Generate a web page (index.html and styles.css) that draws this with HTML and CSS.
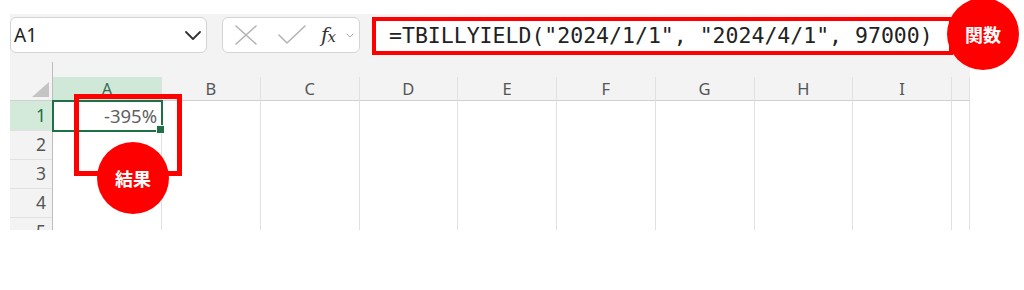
FILE: index.html
```html
<!DOCTYPE html>
<html lang="ja">

<head>
	<meta charset="UTF-8">
	<meta name="viewport" content="width=device-width, initial-scale=1.0">
	<title>TBILLYIELD</title>
	<link rel="stylesheet" href="styles.css">
</head>

<body>
	<main class="sheet">
		<header class="toolbar">
			<div class="namebox">
				<span>A1</span>
				<svg class="chev" width="16" height="9" viewBox="0 0 16 9"><path d="M1 1l7 7 7-7" /></svg>
			</div>
			<div class="fbuttons">
				<svg class="btn" width="22" height="20" viewBox="0 0 22 20"><path d="M1 1l20 18M21 1L1 19" /></svg>
				<svg class="btn" width="28" height="20" viewBox="0 0 28 20"><path d="M1 10l8 8L27 1" /></svg>
				<span class="fx"><i>f</i><i class="x">x</i></span>
				<svg class="mini" width="8" height="5" viewBox="0 0 8 5"><path d="M1 1l3 3 3-3" /></svg>
			</div>
			<div class="formula">=TBILLYIELD("2024/1/1", "2024/4/1", 97000)</div>
		</header>

		<section class="grid">
			<div class="row gap">
				<div class="rh"></div>
				<div class="fill"></div>
			</div>
			<div class="row head">
				<div class="rh corner"><span></span></div>
				<div class="ch on">A</div>
				<div class="ch">B</div>
				<div class="ch">C</div>
				<div class="ch">D</div>
				<div class="ch">E</div>
				<div class="ch">F</div>
				<div class="ch">G</div>
				<div class="ch">H</div>
				<div class="ch">I</div>
				<div class="ch"></div>
			</div>
			<div class="row">
				<div class="rh on">1</div>
				<div class="c sel">-395%</div>
				<div class="c"></div><div class="c"></div><div class="c"></div><div class="c"></div>
				<div class="c"></div><div class="c"></div><div class="c"></div><div class="c"></div><div class="c"></div>
			</div>
			<div class="row">
				<div class="rh">2</div>
				<div class="c"></div><div class="c"></div><div class="c"></div><div class="c"></div><div class="c"></div>
				<div class="c"></div><div class="c"></div><div class="c"></div><div class="c"></div><div class="c"></div>
			</div>
			<div class="row">
				<div class="rh">3</div>
				<div class="c"></div><div class="c"></div><div class="c"></div><div class="c"></div><div class="c"></div>
				<div class="c"></div><div class="c"></div><div class="c"></div><div class="c"></div><div class="c"></div>
			</div>
			<div class="row">
				<div class="rh">4</div>
				<div class="c"></div><div class="c"></div><div class="c"></div><div class="c"></div><div class="c"></div>
				<div class="c"></div><div class="c"></div><div class="c"></div><div class="c"></div><div class="c"></div>
			</div>
			<div class="row cut">
				<div class="rh">5</div>
				<div class="c"></div><div class="c"></div><div class="c"></div><div class="c"></div><div class="c"></div>
				<div class="c"></div><div class="c"></div><div class="c"></div><div class="c"></div><div class="c"></div>
			</div>
		</section>
	</main>

	<div class="mark"></div>
	<div class="badge func">関数</div>
	<div class="badge result">結果</div>
</body>

</html>
```

FILE: styles.css
```css
* {
	margin: 0;
	padding: 0;
	box-sizing: border-box;
}

body {
	background: #fff;
	font-family: "Noto Sans", "Open Sans", sans-serif;
	color: #222;
}

.sheet {
	width: 960px;
	margin: 14px 0 0 10px;
	background: #f3f3f3;
}

.toolbar {
	display: flex;
	align-items: flex-start;
	height: 48px;
	padding-top: 3px;
}

.namebox,
.fbuttons {
	display: flex;
	align-items: center;
	height: 36px;
	background: #fff;
	border: 1px solid #d4d4d4;
	border-radius: 6px;
}

.namebox {
	width: 197px;
	padding: 0 5px 0 3px;
	justify-content: space-between;
	font-size: 19px;
}

.chev path,
.btn path,
.mini path {
	fill: none;
	stroke-linecap: round;
	stroke-linejoin: round;
}

.chev path {
	stroke: #333;
	stroke-width: 1.8;
}

.fbuttons {
	width: 138px;
	margin-left: 15px;
	padding-left: 12px;
}

.btn path {
	stroke: #b4b4b4;
	stroke-width: 1.6;
}

.btn + .btn {
	margin-left: 21px;
}

.fx {
	margin-left: 15px;
	font-family: "DejaVu Serif", serif;
	font-size: 20px;
	color: #333;
	line-height: 1;
}

.fx .x {
	font-size: 15px;
	margin-left: -1px;
}

.mini {
	margin-left: 10px;
}

.mini path {
	stroke: #aaa;
	stroke-width: 1;
}

.formula {
	width: 581px;
	height: 38px;
	margin-left: 12px;
	padding-left: 13px;
	background: #fff;
	border: 4px solid #f00;
	font-family: "DejaVu Sans Mono", monospace;
	font-size: 21.5px;
	line-height: 30px;
	color: #222;
	white-space: pre;
}

.grid {
	display: grid;
}

.row {
	display: grid;
	grid-template-columns: 43px 109px repeat(8, 98.75px) 18px;
	height: 29px;
}

.gap {
	height: 15px;
}

.gap .fill {
	grid-column: 2 / -1;
}

.head {
	height: 24px;
}

.cut {
	height: 13px;
	overflow: hidden;
}

.rh {
	border-right: 1px solid #bdbdbd;
	border-bottom: 1px solid #e1e1e1;
	text-align: right;
	padding-right: 6px;
	font-size: 17.5px;
	line-height: 29px;
	color: #555;
}

.gap .rh {
	border-bottom: 0;
}

.corner {
	display: flex;
	justify-content: flex-end;
	align-items: flex-end;
	padding: 0 3px 3px 0;
	border-bottom: 1px solid #d0d0d0;
}

.corner span {
	width: 17px;
	height: 15px;
	background: #c4c4c4;
	clip-path: polygon(100% 0, 100% 100%, 0 100%);
}

.rh.on {
	background: #d3eadb;
	color: #1e7145;
}

.ch {
	border-right: 1px solid #e1e1e1;
	border-bottom: 1px solid #d0d0d0;
	text-align: center;
	font-size: 16.5px;
	line-height: 23px;
	color: #555;
}

.ch.on {
	background: #cfe8d8;
	color: #3c6a50;
}

.c {
	background: #fff;
	border-right: 1px solid #e1e1e1;
	border-bottom: 1px solid #e1e1e1;
}

.sel {
	position: relative;
	outline: 2px solid #1e7145;
	outline-offset: -1px;
	text-align: right;
	padding-right: 4px;
	font-size: 18.5px;
	line-height: 29px;
	color: #606060;
}

.sel::after {
	content: "";
	position: absolute;
	right: -4px;
	bottom: -4px;
	width: 7px;
	height: 7px;
	background: #1e7145;
	border: 1px solid #fff;
}

.mark {
	position: absolute;
	left: 74px;
	top: 94px;
	width: 108px;
	height: 82px;
	border: 5px solid #f00;
}

.badge {
	position: absolute;
	display: flex;
	align-items: center;
	justify-content: center;
	width: 72px;
	height: 72px;
	border-radius: 50%;
	background: #f00;
	color: #fff;
	font-family: "Noto Sans CJK JP", sans-serif;
	font-weight: 700;
	font-size: 18px;
}

.func {
	left: 947px;
	top: -2px;
}

.result {
	left: 97px;
	top: 142px;
}
```
